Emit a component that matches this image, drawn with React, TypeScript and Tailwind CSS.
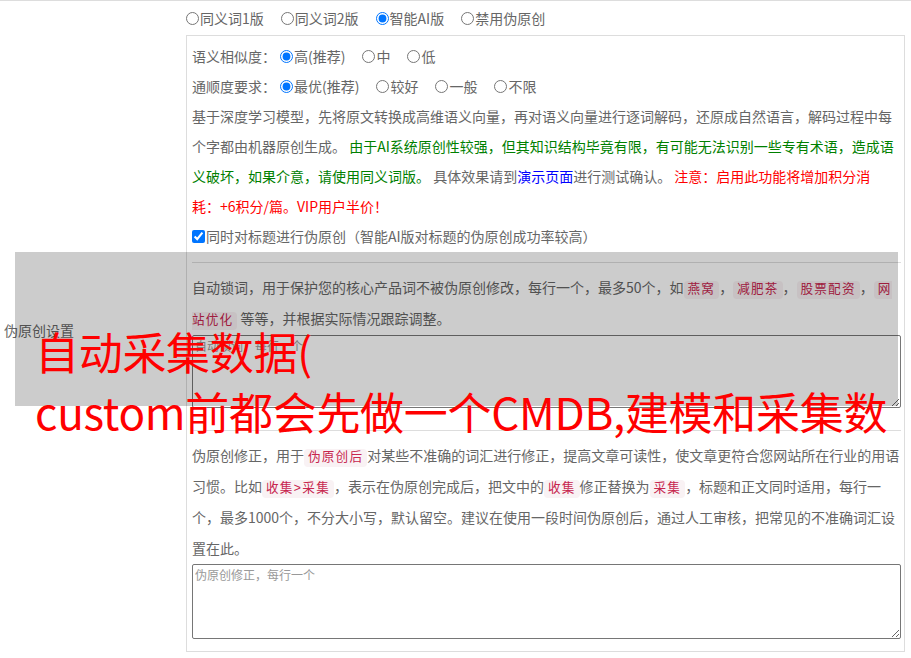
import React from "react";

const code =
  "font-['Liberation_Mono','Noto_Sans_CJK_SC',monospace] text-[12.6px] leading-none tracking-[1.2px] px-[4px] py-[2px] rounded-[4px] bg-[#f9f2f4] text-[#c7254e]";

function Opt({ label, checked = false, name, first = false }: { label: string; checked?: boolean; name: string; first?: boolean }) {
  return (
    <label className={`inline-flex items-center ${first ? "" : "ml-[17px]"}`}>
      <input type="radio" name={name} defaultChecked={checked} className="w-[13px] h-[13px] mr-px" />
      {label}
    </label>
  );
}

export default function App() {
  return (
    <div className="relative w-[911px] h-[658px] overflow-hidden bg-white font-['Noto_Sans_CJK_SC',sans-serif] text-[14px] text-[#666]">
      <div className="flex border-t border-[#ddd]">
        {/* 左侧标签 */}
        <div className="w-[186px] shrink-0 self-center pl-[4px] leading-[20px]">伪原创设置</div>

        {/* 右侧内容 */}
        <div className="pt-[4px] pb-[7px]">
          <div className="h-[26px] flex items-center">
            <Opt name="mode" label="同义词1版" first />
            <Opt name="mode" label="同义词2版" />
            <Opt name="mode" label="智能AI版" checked />
            <Opt name="mode" label="禁用伪原创" />
          </div>

          <div className="mt-[4px] w-[719px] border border-[#ddd] pl-[5px] pr-[3px] pt-[5px] pb-[12px]">
            <div className="h-[30px] flex items-center">
              <span className="mr-[4px]">语义相似度：</span>
              <Opt name="sim" label="高(推荐)" checked first />
              <Opt name="sim" label="中" />
              <Opt name="sim" label="低" />
            </div>
            <div className="h-[30px] flex items-center">
              <span className="mr-[4px]">通顺度要求：</span>
              <Opt name="flu" label="最优(推荐)" checked first />
              <Opt name="flu" label="较好" />
              <Opt name="flu" label="一般" />
              <Opt name="flu" label="不限" />
            </div>

            <p className="leading-[30px]">
              基于深度学习模型，先将原文转换成高维语义向量，再对语义向量进行逐词解码，还原成自然语言，解码过程中每
              <br />
              个字都由机器原创生成。{" "}
              <span className="text-[#008000]">
                由于AI系统原创性较强，但其知识结构毕竟有限，有可能无法识别一些专有术语，造成语
                <br />
                义破坏，如果介意，请使用同义词版。
              </span>{" "}
              具体效果请到<a className="text-[#0000ff]">演示页面</a>进行测试确认。{" "}
              <span className="text-[#ff0000]">
                注意：启用此功能将增加积分消
                <br />
                耗：+6积分/篇。VIP用户半价！
              </span>
            </p>

            <label className="h-[30px] flex items-center">
              <input type="checkbox" defaultChecked className="w-[13px] h-[13px] mr-px" />
              同时对标题进行伪原创（智能AI版对标题的伪原创成功率较高）
            </label>

            <div className="mt-[11px] border-t border-[#ddd] pt-[9px]">
              <p className="leading-[31px]">
                自动锁词，用于保护您的核心产品词不被伪原创修改，每行一个，最多50个，如<code className={code}>燕窝</code>，
                <code className={code}>减肥茶</code>，<code className={code}>股票配资</code>，
                <code className={code}>
                  网<br />站优化
                </code>{" "}
                等等，并根据实际情况跟踪调整。
              </p>
              <textarea
                placeholder="自动锁词，每行一个"
                className="mt-px block w-full h-[73px] border border-[#767676] rounded-[2px] p-[2px] text-[12px] leading-[16px] placeholder:text-[#999]"
              />
            </div>

            <div className="mt-[22px] border-t border-[#ddd] pt-[9px]">
              <p className="leading-[31px]">
                伪原创修正，用于<code className={code}>伪原创后</code>对某些不准确的词汇进行修正，提高文章可读性，使文章更符合您网站所在行业的用语
                <br />
                习惯。比如<code className={code}>收集&gt;采集</code>，表示在伪原创完成后，把文中的<code className={code}>收集</code>修正替换为
                <code className={code}>采集</code>，标题和正文同时适用，每行一
                <br />
                个，最多1000个，不分大小写，默认留空。建议在使用一段时间伪原创后，通过人工审核，把常见的不准确词汇设
                <br />
                置在此。
              </p>
              <textarea
                placeholder="伪原创修正，每行一个"
                className="block w-full h-[75px] border border-[#767676] rounded-[2px] p-[2px] text-[12px] leading-[16px] placeholder:text-[#999]"
              />
            </div>
          </div>
        </div>
      </div>

      {/* 灰色遮罩层 */}
      <div className="absolute left-[15px] top-[252px] w-[883px] h-[154px] bg-black/20" />
      <div className="absolute left-[35px] top-[321px] text-[44px] leading-[60px] tracking-[-0.3px] text-[#ff0000] whitespace-nowrap">
        自动采集数据(
        <br />
        custom前都会先做一个CMDB,建模和采集数
      </div>
    </div>
  );
}
